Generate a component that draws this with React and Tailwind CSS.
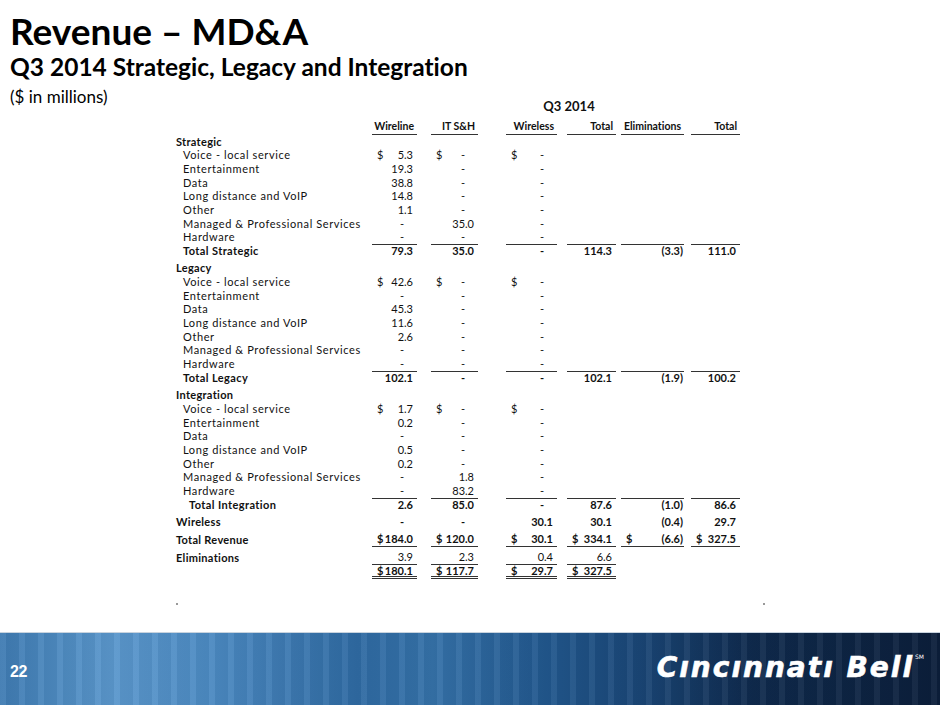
import React from 'react';

const COLS = [
  'w-[45px]',
  'ml-[14px] w-[47px]',
  'ml-[28px] w-[51px]',
  'ml-[10px] w-[49px]',
  'ml-[5px] w-[63px]',
  'ml-[7px] w-[49px]',
];

const HEADERS = ['Wireline', 'IT S&H', 'Wireless', 'Total', 'Eliminations', 'Total'];

const ITEMS = [
  'Voice - local service',
  'Entertainment',
  'Data',
  'Long distance and VoIP',
  'Other',
  'Managed & Professional Services',
  'Hardware',
];

const sections = [
  {
    name: 'Strategic',
    rows: [['$5.3', '$-', '$-'], ['19.3', '-', '-'], ['38.8', '-', '-'], ['14.8', '-', '-'], ['1.1', '-', '-'], ['-', '35.0', '-'], ['-', '-', '-']],
    total: { label: 'Total Strategic', indent: 'pl-[7px]', values: ['79.3', '35.0', '-', '114.3', '(3.3)', '111.0'] },
  },
  {
    name: 'Legacy',
    rows: [['$42.6', '$-', '$-'], ['-', '-', '-'], ['45.3', '-', '-'], ['11.6', '-', '-'], ['2.6', '-', '-'], ['-', '-', '-'], ['-', '-', '-']],
    total: { label: 'Total Legacy', indent: 'pl-[7px]', values: ['102.1', '-', '-', '102.1', '(1.9)', '100.2'] },
  },
  {
    name: 'Integration',
    rows: [['$1.7', '$-', '$-'], ['0.2', '-', '-'], ['-', '-', '-'], ['0.5', '-', '-'], ['0.2', '-', '-'], ['-', '1.8', '-'], ['-', '83.2', '-']],
    total: { label: 'Total Integration', indent: 'pl-[13px]', values: ['2.6', '85.0', '-', '87.6', '(1.0)', '86.6'] },
  },
];

// accounting style cell: "$" pinned left, value right, dash sits in from the edge
const Cell = ({ value, className = '' }) => {
  if (value == null) return <div className={`${className} shrink-0`} />;
  const dollar = value.startsWith('$');
  const v = dollar ? value.slice(1) : value;
  const neg = v.startsWith('(');
  return (
    <div className={`${className} shrink-0 h-full flex items-center justify-between`}>
      <span className="pl-[5px]">{dollar ? '$' : ''}</span>
      {v === '-' ? (
        <span className="pr-[13px]">-</span>
      ) : (
        <span className={neg ? 'pr-[1px]' : 'pr-[4px]'}>{v}</span>
      )}
    </div>
  );
};

const Row = ({ label, labelClass = '', values = [], cellClass = '', rowClass = '' }) => (
  <div className={`flex items-center h-[13.66px] ${rowClass}`}>
    <div className={`w-[196px] shrink-0 whitespace-nowrap ${labelClass}`}>{label}</div>
    {COLS.map((c, i) => (
      <Cell key={i} value={values[i]} className={`${c} ${values[i] != null ? cellClass : ''}`} />
    ))}
  </div>
);

export default function App() {
  return (
    <div className="w-[940px] h-[705px] flex flex-col bg-white overflow-hidden text-black [font-variant-ligatures:none]" style={{ fontFamily: 'Lato, "Open Sans", sans-serif' }}>
      <div className="h-[632px] shrink-0 flex flex-col">
        {/* heading */}
        <div className="h-[99px] shrink-0 pl-[10px] pt-[12px]">
          <h1 className="text-[37px] leading-none h-[37px] font-bold whitespace-nowrap">Revenue – MD&amp;A</h1>
          <h2 className="mt-[6px] text-[24.5px] leading-none h-[24px] font-bold whitespace-nowrap">Q3 2014 Strategic, Legacy and Integration</h2>
          <p className="mt-[9px] text-[17px] leading-none whitespace-nowrap">($ in millions)</p>
        </div>

        {/* table */}
        <div className="pl-[176px] text-[11px] text-[#111]">
          <div className="flex h-[14px] mt-[1px] items-center">
            <div className="w-[196px] shrink-0" />
            <div className="w-[394px] text-center text-[13px] font-bold">Q3 2014</div>
          </div>
          <div className="flex h-[16px] mt-[5px] items-center">
            <div className="w-[196px] shrink-0" />
            {COLS.map((c, i) => (
              <div key={i} className={`${c} shrink-0 h-full border-b border-[#333] text-[10.5px] font-bold flex items-center justify-end pr-[3px] whitespace-nowrap`}>
                {HEADERS[i]}
              </div>
            ))}
          </div>

          {sections.map((s, si) => (
            <div key={s.name} className={si > 0 ? 'mt-[4px]' : ''}>
              <Row label={s.name} labelClass="font-bold tracking-[0.3px]" />
              {ITEMS.map((item, i) => (
                <Row key={item} label={item} labelClass="pl-[7px] tracking-[0.6px]" values={s.rows[i]} />
              ))}
              <Row
                label={s.total.label}
                labelClass={`font-bold tracking-[0.4px] ${s.total.indent}`}
                values={s.total.values}
                cellClass="border-t border-[#333]"
                rowClass="font-bold"
              />
            </div>
          ))}

          <Row label="Wireless" labelClass="font-bold tracking-[0.3px]" values={['-', '-', '30.1', '30.1', '(0.4)', '29.7']} rowClass="font-bold mt-[4px]" />
          <Row
            label="Total Revenue"
            labelClass="font-bold tracking-[0.3px]"
            values={['$184.0', '$120.0', '$30.1', '$334.1', '$(6.6)', '$327.5']}
            cellClass="border-b border-[#333]"
            rowClass="font-bold mt-[4px]"
          />
          <Row
            label="Eliminations"
            labelClass="font-bold tracking-[0.3px]"
            values={['3.9', '2.3', '0.4', '6.6']}
            cellClass="border-b border-[#333]"
            rowClass="mt-[4px]"
          />
          <Row
            label=""
            values={['$180.1', '$117.7', '$29.7', '$327.5']}
            cellClass="border-b-[3px] border-double border-[#333] h-[15px]"
            rowClass="font-bold mt-[1px]"
          />
        </div>

        <div className="mt-[24px] ml-[176px] w-[589px] flex justify-between">
          <span className="w-[2px] h-[2px] bg-[#999]" />
          <span className="w-[2px] h-[2px] bg-[#999]" />
        </div>
      </div>

      {/* footer band */}
      <div className="relative h-[73px] shrink-0 border-t border-[#c8d3de] bg-[linear-gradient(90deg,#3f7bb2_0%,#5a97cc_12%,#4c8ac2_22%,#2f6aa2_38%,#3571a8_46%,#21578d_58%,#1a4676_68%,#0f2a4d_80%,#0b1e3a_100%)] flex items-center justify-between">
        <div className="absolute inset-0 bg-[repeating-linear-gradient(90deg,rgba(255,255,255,0.05)_0px,rgba(255,255,255,0.05)_6px,rgba(0,0,0,0.04)_6px,rgba(0,0,0,0.04)_19px)]" />
        <span className="relative pl-[10px] pt-[6px] text-white font-bold text-[16px] tracking-[-0.5px]" style={{ fontFamily: '"Liberation Sans Narrow", "Liberation Sans", sans-serif' }}>22</span>
        <div className="relative flex items-start pr-[16px] pb-[2px]">
          <span className="text-white italic font-bold text-[28px] leading-none tracking-[2px] [-webkit-text-stroke:0.6px_white]" style={{ fontFamily: '"DejaVu Sans", sans-serif' }}>
            Cıncınnatı Bell
          </span>
          <span className="text-white text-[6px] ml-[1px] leading-none" style={{ fontFamily: '"DejaVu Sans", sans-serif' }}>SM</span>
        </div>
      </div>
    </div>
  );
}
